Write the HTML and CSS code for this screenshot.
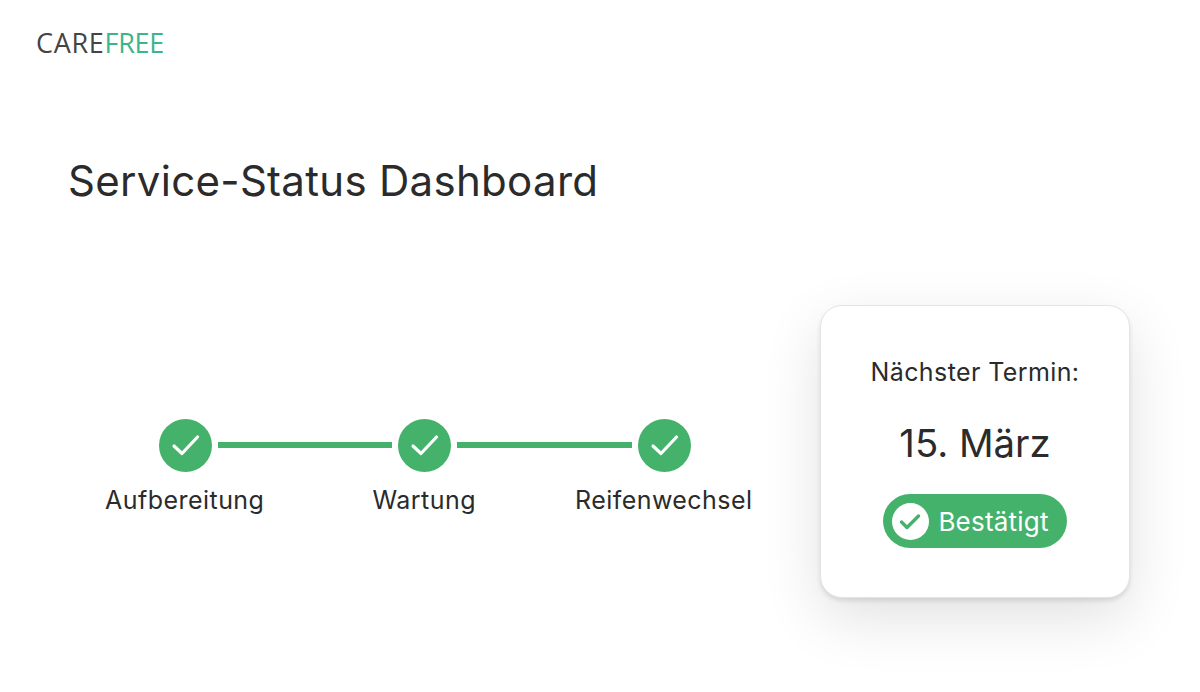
FILE: index.html
```html
<!DOCTYPE html>
<html lang="de">
<head>
    <meta charset="UTF-8">
    <title>Service-Status Dashboard</title>
    <link rel="stylesheet" href="styles.css">
</head>
<body>
    <div class="logo"><span class="logo-dark">CARE</span><span class="logo-accent">FREE</span></div>
    <h1>Service-Status Dashboard</h1>
    <div class="content">
        <div class="steps">
            <div class="track">
                <div class="dot"><svg viewBox="0 0 53 53"><path d="M15 27l8 7.500 15.500-16.500"/></svg></div>
                <div class="line"></div>
                <div class="dot"><svg viewBox="0 0 53 53"><path d="M15 27l8 7.500 15.500-16.500"/></svg></div>
                <div class="line"></div>
                <div class="dot"><svg viewBox="0 0 53 53"><path d="M15 27l8 7.500 15.500-16.500"/></svg></div>
            </div>
            <div class="labels">
                <span>Aufbereitung</span>
                <span>Wartung</span>
                <span>Reifenwechsel</span>
            </div>
        </div>
        <div class="card">
            <p class="card-label">Nächster Termin:</p>
            <p class="card-date">15. März</p>
            <div class="badge">
                <div class="badge-icon"><svg viewBox="0 0 37 37"><path d="M9.500 19l5.500 5.500 11.500-11.500"/></svg></div>
                <span>Bestätigt</span>
            </div>
        </div>
    </div>
</body>
</html>
```

FILE: styles.css
```css
* {
    margin: 0;
    padding: 0;
    box-sizing: border-box;
}

body {
    height: 692px;
    overflow: hidden;
    background-color: #fff;
    color: #2b2b2b;
    font-family: "Inter", "Liberation Sans", sans-serif;
}

.logo {
    padding: 25px 0 0 36px;
    height: 76px;
    font-family: "Open Sans", sans-serif;
    font-size: 27px;
    line-height: 36px;
}

.logo-dark {
    color: #444;
    letter-spacing: 0.7px;
}

.logo-accent {
    color: #3cb58c;
    letter-spacing: -0.3px;
}

h1 {
    margin: 0 0 0 68px;
    padding-top: 76px;
    font-size: 42px;
    line-height: 58px;
    font-weight: 400;
    letter-spacing: 0.3px;
}

.content {
    display: flex;
    align-items: center;
    padding: 95px 0 0 65px;
}

.steps {
    width: 755px;
    padding-top: 30px;
}

.track {
    display: flex;
    align-items: center;
    gap: 6px;
    margin-left: 94px;
}

.dot {
    width: 53px;
    height: 53px;
    border-radius: 50%;
    background-color: #45b26b;
}

.dot svg {
    display: block;
}

.dot path {
    fill: none;
    stroke: #fff;
    stroke-width: 3.2;
    stroke-linecap: round;
    stroke-linejoin: round;
}

.line {
    width: 174.3px;
    height: 6px;
    background-color: #45b26b;
}

.labels {
    display: flex;
    margin-top: 13px;
}

.labels span {
    width: 239.5px;
    text-align: center;
    font-size: 25px;
    line-height: 30px;
    letter-spacing: 0.45px;
}

.card {
    display: flex;
    flex-direction: column;
    align-items: center;
    width: 310px;
    height: 293px;
    padding-top: 51px;
    background-color: #fff;
    border: 1px solid #e4e4e4;
    border-radius: 22px;
    box-shadow: 0 3px 4px rgba(0, 0, 0, 0.1), 0 20px 60px rgba(0, 0, 0, 0.12);
}

.card-label {
    font-size: 25px;
    line-height: 30px;
    letter-spacing: 0.4px;
}

.card-date {
    margin-top: 32px;
    font-size: 38.3px;
    line-height: 48px;
}

.badge {
    display: flex;
    align-items: center;
    gap: 9px;
    margin-top: 27px;
    height: 54px;
    padding: 0 18px 0 9px;
    border-radius: 27px;
    background-color: #45b26b;
    color: #fff;
    font-size: 26px;
    letter-spacing: 0.2px;
}

.badge-icon {
    width: 37px;
    height: 37px;
    border-radius: 50%;
    background-color: #fff;
}

.badge-icon svg {
    display: block;
}

.badge-icon path {
    fill: none;
    stroke: #45b26b;
    stroke-width: 3.4;
    stroke-linecap: round;
    stroke-linejoin: round;
}
```
